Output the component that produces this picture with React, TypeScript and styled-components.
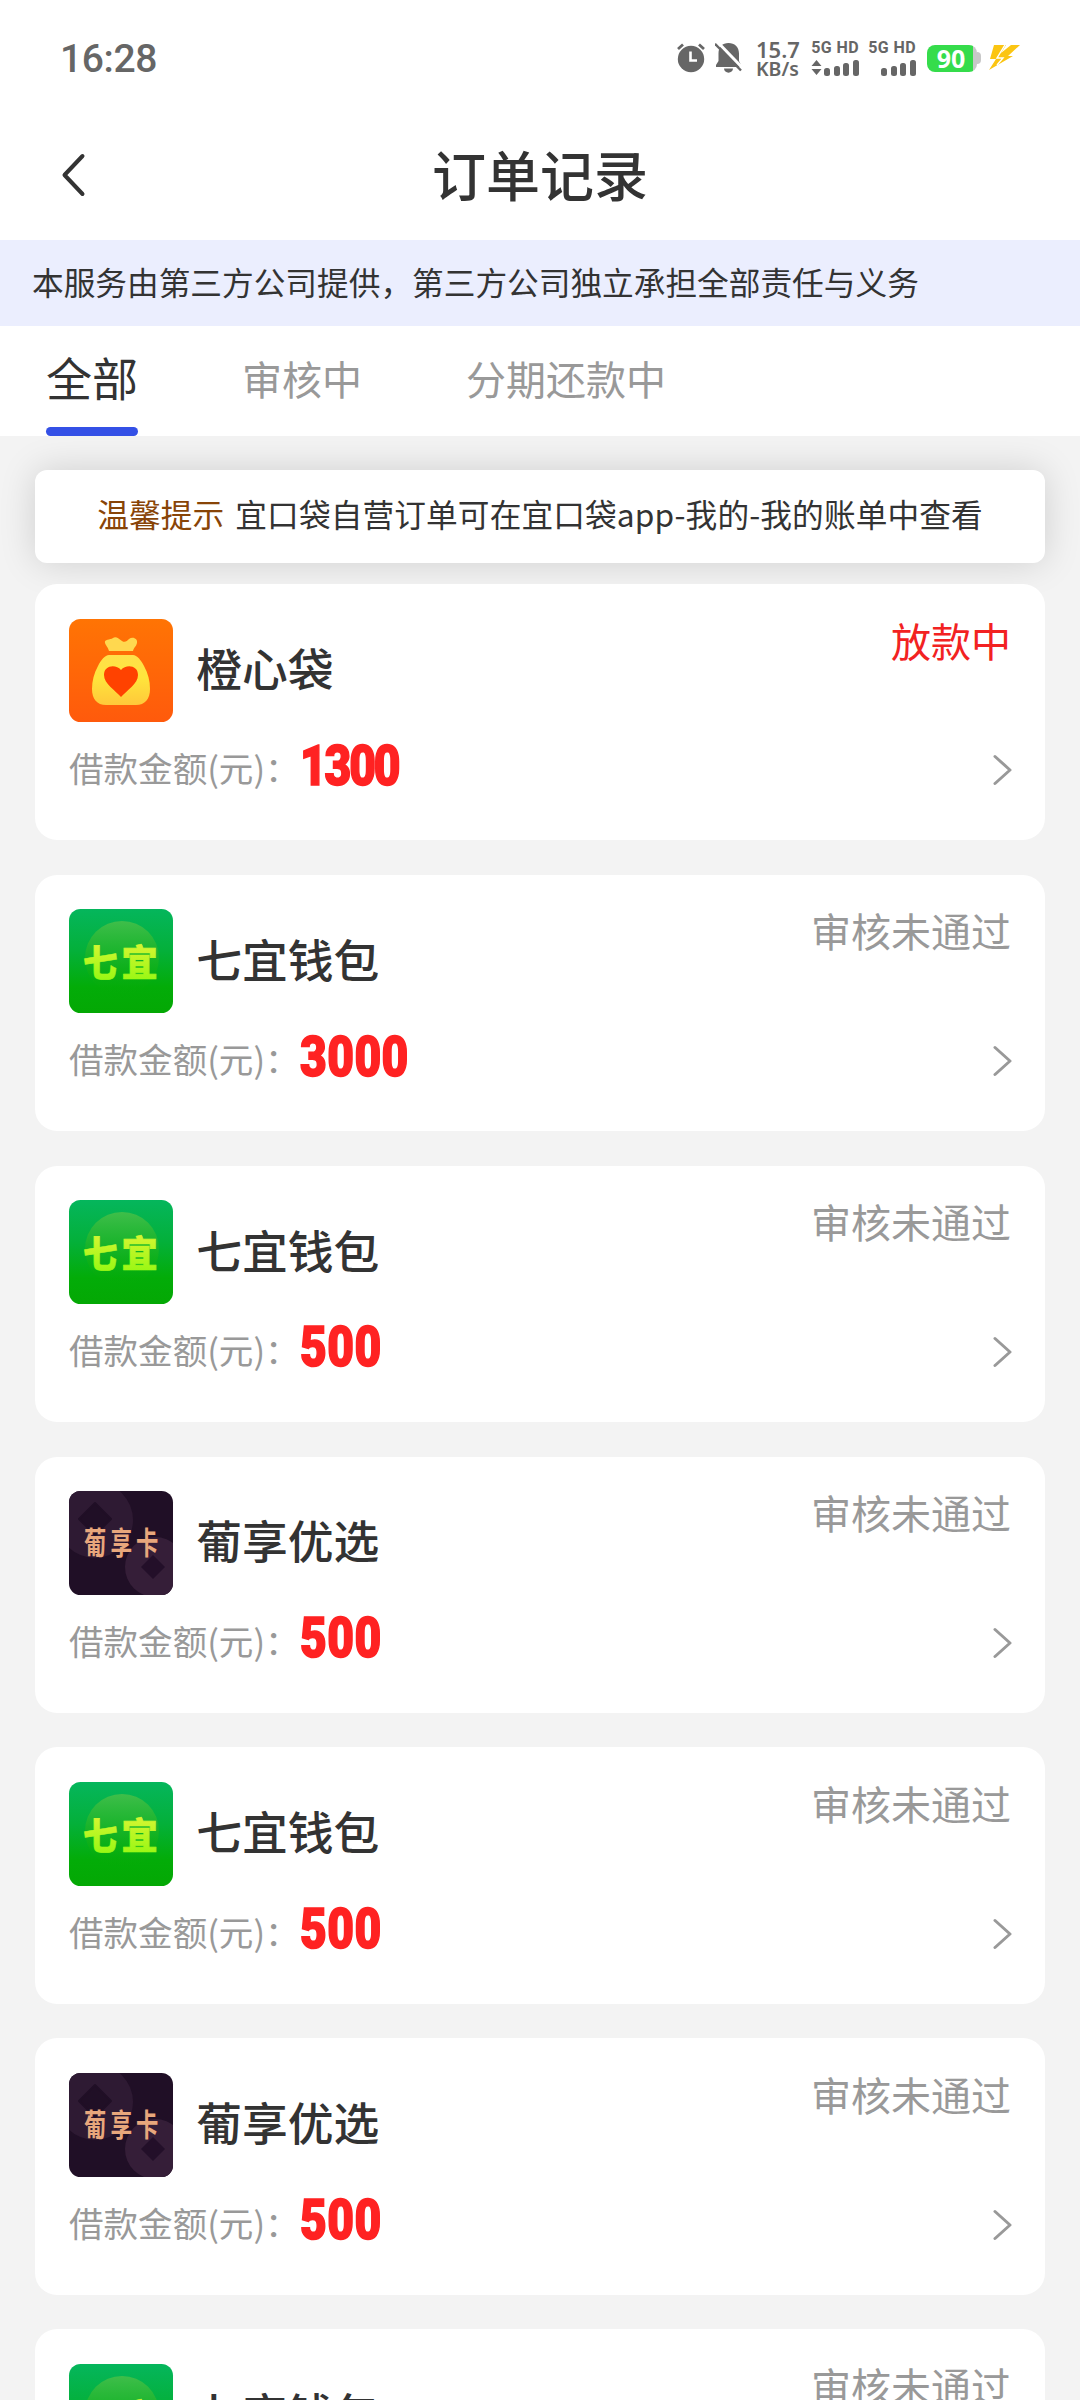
import React from "react";
import styled, { createGlobalStyle } from "styled-components";

const cjk = `"Noto Sans CJK SC", "Noto Sans", sans-serif`;

const GlobalStyle = createGlobalStyle`
  * { box-sizing: border-box; }
  html, body { margin: 0; padding: 0; }
  body { background: #f3f3f3; font-family: ${cjk}; color: #333; overflow: hidden; }
`;

const Screen = styled.div`
  width: 1080px;
  height: 2400px;
  overflow: hidden;
  background: #f3f3f3;
`;

const StatusBar = styled.div`
  height: 112px;
  padding: 0 60px 0 60px;
  background: #fff;
  display: flex;
  align-items: center;
  justify-content: space-between;
`;

const Clock = styled.div`
  font: 500 39px/46px Roboto, sans-serif;
  letter-spacing: -0.4px;
  color: #666;
  padding-top: 5px;
`;

const StatusIcons = styled.div`
  display: flex;
  height: 36px;
  margin-top: 5px;
  align-items: flex-start;
`;

const IconSlot = styled.div<{ $gap: number; $top: number }>`
  margin-left: ${(p) => p.$gap}px;
  padding-top: ${(p) => p.$top}px;
  line-height: 0;
`;

const Speed = styled.div`
  width: 45px;
  margin: -2px 0 0 14px;
  display: flex;
  flex-direction: column;
  color: #666;
  font-family: "Noto Sans", sans-serif;
  font-weight: 600;
  white-space: nowrap;
`;

const SpeedLine = styled.span<{ $size: number; $h: number }>`
  font-size: ${(p) => p.$size}px;
  line-height: ${(p) => p.$h}px;
`;

const Signal = styled.div<{ $gap: number }>`
  width: 48px;
  margin-left: ${(p) => p.$gap}px;
  display: flex;
  flex-direction: column;
  align-items: flex-end;
  gap: 4px;
`;

const SignalLabel = styled.span`
  font: 700 16px/14px Roboto, sans-serif;
  letter-spacing: 0.4px;
  color: #666;
  white-space: nowrap;
`;

const Battery = styled.div`
  display: flex;
  align-items: center;
  margin: 4px 0 0 11px;
`;

const BatteryBody = styled.div`
  width: 50px;
  height: 27px;
  border-radius: 8px;
  background: linear-gradient(90deg, #35dc4b 46px, #c8c8c8 46px);
  color: #fff;
  font: 700 25px/27px "Noto Sans", sans-serif;
  padding-right: 2px;
  text-align: center;
`;

const BatteryTip = styled.div`
  width: 4px;
  height: 12px;
  border-radius: 0 4px 4px 0;
  background: #c8c8c8;
`;

const Header = styled.header`
  height: 128px;
  background: #fff;
  display: grid;
  grid-template-columns: 140px 1fr 140px;
  align-items: center;
`;

const BackButton = styled.button`
  border: 0;
  background: none;
  padding: 0 0 2px 60px;
  text-align: left;
  line-height: 0;
`;

const Title = styled.h1`
  margin: 0;
  text-align: center;
  font-size: 54px;
  line-height: 64px;
  font-weight: 500;
  padding-bottom: 4px;
`;

const Notice = styled.div`
  height: 86px;
  background: #ebeefe;
  padding: 0 32px;
  font-size: 31.68px;
  line-height: 83px;
  white-space: nowrap;
`;

const Tabs = styled.nav`
  height: 110px;
  background: #fff;
  padding-left: 46px;
  display: flex;
`;

const Tab = styled.div<{ $active?: boolean; $gap?: number }>`
  height: 110px;
  margin-left: ${(p) => p.$gap ?? 0}px;
  font-size: ${(p) => (p.$active ? 46 : 40)}px;
  line-height: 101px;
  padding-top: ${(p) => (p.$active ? 0 : 2)}px;
  color: ${(p) => (p.$active ? "#333" : "#999")};
  display: flex;
  flex-direction: column;

  &::after {
    content: "";
    display: ${(p) => (p.$active ? "block" : "none")};
    height: 9px;
    border-radius: 5px;
    background: #3450e6;
  }
`;

const Content = styled.main`
  padding: 34px 35px 0;
  display: flex;
  flex-direction: column;
`;

const Tip = styled.div`
  height: 93px;
  border-radius: 12px;
  background: #fff;
  box-shadow: 0 0 36px rgba(0, 0, 0, 0.15);
  display: flex;
  justify-content: center;
  gap: 11px;
  font-size: 31.68px;
  letter-spacing: 0.12px;
  line-height: 87px;
  white-space: nowrap;
`;

const TipTag = styled.span`
  color: #884407;
`;

const List = styled.div`
  margin-top: 21px;
  display: flex;
  flex-direction: column;
  gap: 34.56px;
  position: relative;
`;

const Card = styled.article`
  height: 256.32px;
  border-radius: 22px;
  background: #fff;
  padding: 34.56px 34px 0;
`;

const CardTop = styled.div`
  height: 103.7px;
  display: flex;
  align-items: center;
`;

const Logo = styled.div<{ $bg: string }>`
  width: 103.7px;
  height: 103.7px;
  border-radius: 11.5px;
  overflow: hidden;
  background: ${(p) => p.$bg};
  line-height: 0;
`;

const Name = styled.div`
  margin-left: 23.5px;
  flex: 1;
  font-size: 45.8px;
  line-height: 60px;
  font-weight: 500;
  padding-bottom: 7px;
`;

const Status = styled.div<{ $hot?: boolean }>`
  align-self: flex-start;
  font-size: 40px;
  line-height: 42px;
  color: ${(p) => (p.$hot ? "#f22222" : "#999")};
`;

const CardBottom = styled.div`
  height: 96px;
  margin-right: -2px;
  display: flex;
  align-items: center;
`;

const Label = styled.span`
  width: 231px;
  font-size: 34.56px;
  line-height: 50px;
  padding-bottom: 6px;
  color: #999;
  white-space: nowrap;
`;

const Amount = styled.span<{ $tight: boolean }>`
  flex: 1;
  font: 900 55px/60px Roboto, sans-serif;
  padding-bottom: 9px;
  color: #ff2222;

  & > span {
    display: inline-block;
    letter-spacing: ${(p) => (p.$tight ? -2.6 : 0.5)}px;
    transform: scaleX(0.84);
    transform-origin: left center;
    -webkit-text-stroke: 1.6px #ff2222;
  }
`;

const Arrow = () => (
  <svg width="20" height="32" viewBox="0 0 20 32" fill="none">
    <path d="M2 2.5 17 16 2 29.5" stroke="#999" strokeWidth="3" strokeLinecap="round" strokeLinejoin="round" />
  </svg>
);

const OrangeLogo = () => (
  <svg width="104" height="104" viewBox="0 0 104 104">
    <defs>
      <linearGradient id="bag" x1="0" y1="0" x2="0" y2="1">
        <stop offset="0" stopColor="#ffe04a" />
        <stop offset="0.45" stopColor="#ffe53c" />
        <stop offset="1" stopColor="#ffc83a" />
      </linearGradient>
    </defs>
    <path d="M40 32 C39 28 37 27 36 24 C35 20 41 21 44 19 C47 17 50 20 53 22 C56 24 58 22 60 20 C64 17 69 20 68 24 C67 28 65 28 64 32 Z" fill="#ffd84f" />
    <path d="M40 36 H64 C68 36 72 41 75 47 C79 54 81 62 81 70 C81 80 76 86 67 86 H37 C28 86 23 80 23 70 C23 62 25 54 29 47 C32 41 36 36 40 36 Z" fill="url(#bag)" />
    <path d="M52 78 C46 71 35 65 35 56 C35 46 47 45 52 51 C57 45 69 46 69 56 C69 65 58 71 52 78 Z" fill="#ff4200" />
  </svg>
);

const GreenLogo = () => (
  <svg width="104" height="104" viewBox="0 0 104 104">
    <defs>
      <linearGradient id="ball" x1="0" y1="0" x2="0" y2="1">
        <stop offset="0" stopColor="#3fbe4a" />
        <stop offset="0.7" stopColor="#10b012" stopOpacity="0.6" />
        <stop offset="1" stopColor="#06a806" stopOpacity="0" />
      </linearGradient>
      <linearGradient id="lime" x1="0" y1="0" x2="0" y2="1">
        <stop offset="0" stopColor="#e6f53a" />
        <stop offset="1" stopColor="#8df80e" />
      </linearGradient>
    </defs>
    <circle cx="53" cy="49" r="37" fill="url(#ball)" />
    <g fill="url(#lime)" stroke="url(#lime)" strokeWidth="0.6" fontSize="37" fontWeight="900" fontFamily='"Noto Sans CJK SC", sans-serif'>
      <text transform="translate(14 67.5) scale(0.93 1)">七</text>
      <text transform="translate(52.5 67.5) scale(0.98 1)">宜</text>
    </g>
  </svg>
);

const PurpleLogo = () => (
  <svg width="104" height="104" viewBox="0 0 104 104">
    <circle cx="26" cy="29" r="38" fill="#2e1a33" />
    <path d="M26 12 42 28 26 44 10 28 Z" fill="#200f26" strokeLinejoin="round" stroke="#200f26" strokeWidth="2" />
    <circle cx="86" cy="76" r="30" fill="#351e38" />
    <path d="M84 64 96 76 84 88 72 76 Z" fill="#230f29" />
    <g fontSize="31" fontWeight="700" fill="#e8a77c" fontFamily='"Noto Sans CJK SC", sans-serif'>
      <text transform="translate(15 63) scale(0.72 1)">葡</text>
      <text transform="translate(41.5 63) scale(0.7 1)">享</text>
      <text transform="translate(67 63) scale(0.72 1)">卡</text>
    </g>
  </svg>
);

const brands = {
  orange: { name: "橙心袋", bg: "linear-gradient(180deg, #ff7404, #ff5a0c)", Mark: OrangeLogo },
  green: { name: "七宜钱包", bg: "linear-gradient(180deg, #05b65c, #04b03a 40%, #03ac08 75%, #04a804)", Mark: GreenLogo },
  purple: { name: "葡享优选", bg: "#200f26", Mark: PurpleLogo },
};

type Order = { brand: keyof typeof brands; amount: number; status: string; hot?: boolean };

const orders: Order[] = [
  { brand: "orange", amount: 1300, status: "放款中", hot: true },
  { brand: "green", amount: 3000, status: "审核未通过" },
  { brand: "green", amount: 500, status: "审核未通过" },
  { brand: "purple", amount: 500, status: "审核未通过" },
  { brand: "green", amount: 500, status: "审核未通过" },
  { brand: "purple", amount: 500, status: "审核未通过" },
  { brand: "green", amount: 500, status: "审核未通过" },
];

const OrderCard = ({ order }: { order: Order }) => {
  const { name, bg, Mark } = brands[order.brand];
  return (
    <Card>
      <CardTop>
        <Logo $bg={bg}>
          <Mark />
        </Logo>
        <Name>{name}</Name>
        <Status $hot={order.hot}>{order.status}</Status>
      </CardTop>
      <CardBottom>
        <Label>借款金额(元)：</Label>
        <Amount $tight={String(order.amount).startsWith("1")}>
          <span>{order.amount}</span>
        </Amount>
        <Arrow />
      </CardBottom>
    </Card>
  );
};

const Bars = ({ arrows }: { arrows?: boolean }) => (
  <svg width="48" height="17" viewBox="0 0 48 17" fill="#666">
    {arrows && <path d="M5.5 1 10.5 7H0.5ZM5.5 16 0.5 10H10.5Z" />}
    <rect x="13" y="9" width="6" height="8" rx="2.5" />
    <rect x="23" y="7" width="6" height="10" rx="2.5" />
    <rect x="32" y="4" width="6" height="13" rx="2.5" />
    <rect x="42" y="1" width="6" height="16" rx="2.5" />
  </svg>
);

export default function App() {
  return (
    <>
      <GlobalStyle />
      <Screen>
        <StatusBar>
          <Clock>16:28</Clock>
          <StatusIcons>
            <IconSlot $gap={0} $top={2}>
              <svg width="28" height="30" viewBox="0 0 28 30" fill="none">
                <circle cx="14" cy="16" r="13.2" fill="#666" />
                <path d="M1 6 6 1.5M27 6 22 1.5" stroke="#666" strokeWidth="2.8" />
                <path d="M13.5 8.5V17.5H20" stroke="#fff" strokeWidth="2.6" />
              </svg>
            </IconSlot>
            <IconSlot $gap={10} $top={1}>
              <svg width="27" height="31" viewBox="0 0 27 31" fill="none">
                <path d="M13.5 1C19.5 1 24 5 24 11.5V19L26 23V25H1V23L3.5 19V11.5C3.5 5 7.5 1 13.5 1Z" fill="#666" />
                <path d="M9 26.5H18C18 32 9 32 9 26.5Z" fill="#666" />
                <path d="M2-.5 28 26.5" stroke="#fff" strokeWidth="3" />
                <path d="M0 1.8 26 28.5" stroke="#666" strokeWidth="2.4" />
              </svg>
            </IconSlot>
            <Speed>
              <SpeedLine $size={22} $h={20}>15.7</SpeedLine>
              <SpeedLine $size={19.5} $h={19}>KB/s</SpeedLine>
            </Speed>
            <Signal $gap={10}>
              <SignalLabel>5G HD</SignalLabel>
              <Bars arrows />
            </Signal>
            <Signal $gap={9}>
              <SignalLabel>5G HD</SignalLabel>
              <Bars />
            </Signal>
            <Battery>
              <BatteryBody>90</BatteryBody>
              <BatteryTip />
            </Battery>
            <IconSlot $gap={8} $top={4}>
              <svg width="31" height="25" viewBox="0 0 31 25">
                <path d="M5 0H17L12 8 22 0H31L19 11H24L0 25 7 14H1Z" fill="#fbc512" />
                <path d="M16 0 8 13H14L8 20" fill="none" stroke="#fff" strokeWidth="1.4" />
              </svg>
            </IconSlot>
          </StatusIcons>
        </StatusBar>
        <Header>
          <BackButton aria-label="返回">
            <svg width="28" height="44" viewBox="0 0 28 44" fill="none">
              <path d="M22.5 3 4.5 22 22.5 41" stroke="#333" strokeWidth="4" strokeLinecap="round" strokeLinejoin="round" />
            </svg>
          </BackButton>
          <Title>订单记录</Title>
        </Header>
        <Notice>本服务由第三方公司提供，第三方公司独立承担全部责任与义务</Notice>
        <Tabs>
          <Tab $active>全部</Tab>
          <Tab $gap={104}>审核中</Tab>
          <Tab $gap={104}>分期还款中</Tab>
        </Tabs>
        <Content>
          <Tip>
            <TipTag>温馨提示</TipTag>
            <span>宜口袋自营订单可在宜口袋app-我的-我的账单中查看</span>
          </Tip>
          <List>
            {orders.map((order, i) => (
              <OrderCard key={i} order={order} />
            ))}
          </List>
        </Content>
      </Screen>
    </>
  );
}
